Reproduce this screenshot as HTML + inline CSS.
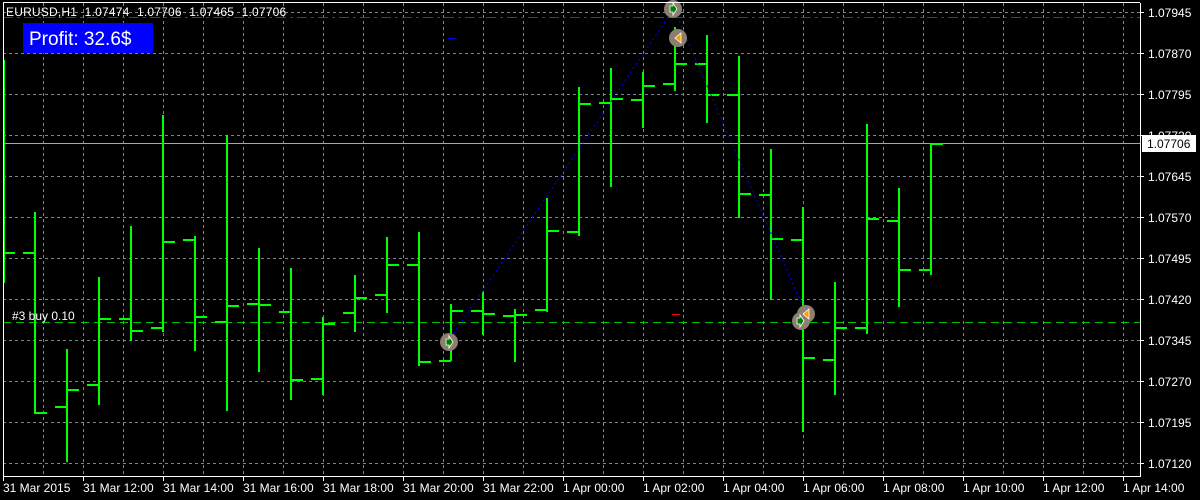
<!DOCTYPE html>
<html><head><meta charset="utf-8"><style>
html,body{margin:0;padding:0;background:#000;width:1200px;height:500px;overflow:hidden}
svg text{font-family:"Liberation Sans",sans-serif;font-size:12px;fill:#fff}
</style></head><body>
<svg width="1200" height="500" xmlns="http://www.w3.org/2000/svg">
<rect width="1200" height="500" fill="#000"/>
<g stroke="#7b8593" stroke-width="1" stroke-dasharray="3,3">
<path d="M3 12.5H1140M3 53.5H1140M3 94.5H1140M3 135.5H1140M3 176.5H1140M3 217.5H1140M3 258.5H1140M3 299.5H1140M3 340.5H1140M3 381.5H1140M3 422.5H1140M3 463.5H1140"/>
<path d="M43.5 3V476M83.5 3V476M123.5 3V476M163.5 3V476M203.5 3V476M243.5 3V476M283.5 3V476M323.5 3V476M363.5 3V476M403.5 3V476M443.5 3V476M483.5 3V476M523.5 3V476M563.5 3V476M603.5 3V476M643.5 3V476M683.5 3V476M723.5 3V476M763.5 3V476M803.5 3V476M843.5 3V476M883.5 3V476M923.5 3V476M963.5 3V476M1003.5 3V476M1043.5 3V476M1083.5 3V476M1123.5 3V476"/>
</g>
<path d="M3 17.5H1140" stroke="#e00000" stroke-width="1" stroke-dasharray="10,4,3,4"/>
<path d="M3 322.5H1140" stroke="#00c000" stroke-width="1" stroke-dasharray="8,5"/>
<path d="M3 143.5H1140" stroke="#a0a8b0" stroke-width="1"/>
<path d="M448 38.5H456" stroke="#0000ff" stroke-width="1"/>
<path d="M672 314.5H680" stroke="#ff0000" stroke-width="1"/>
<g stroke="#00ff00" stroke-width="2" fill="none">
<path d="M4 60V283M3 253H15"/>
<path d="M35 212V414M23 253H35M35 413H47"/>
<path d="M67 349V462M55 407H67M67 390H79"/>
<path d="M99 277V405M87 385H99M99 319H111"/>
<path d="M131 226V341M119 319H131M131 331H143"/>
<path d="M163 115V332M151 328H163M163 242H175"/>
<path d="M195 236V351M183 240H195M195 317H207"/>
<path d="M227 135V411M215 322H227M227 306H239"/>
<path d="M259 248V372M247 304H259M259 305H271"/>
<path d="M291 268V400M279 312H291M291 380H303"/>
<path d="M323 317V395M311 379H323M323 324H335"/>
<path d="M355 275V332M343 313H355M355 298H367"/>
<path d="M387 237V313M375 295H387M387 265H399"/>
<path d="M419 232V366M407 265H419M419 362H431"/>
<path d="M451 304V361M439 361H451M451 311H463"/>
<path d="M483 292V335M471 311H483M483 314H495"/>
<path d="M515 309V362M503 316H515M515 315H527"/>
<path d="M547 198V312M535 310H547M547 231H559"/>
<path d="M579 87V236M567 232H579M579 104H591"/>
<path d="M611 68V187M599 103H611M611 99H623"/>
<path d="M643 72V128M631 100H643M643 86H655"/>
<path d="M675 27V91M663 84H675M675 64H687"/>
<path d="M707 35V123M695 64H707M707 95H719"/>
<path d="M739 56V218M727 95H739M739 194H751"/>
<path d="M771 149V300M759 195H771M771 239H783"/>
<path d="M803 207V432M791 240H803M803 358H815"/>
<path d="M835 282V395M823 360H835M835 328H847"/>
<path d="M867 124V334M855 328H867M867 219H879"/>
<path d="M899 188V307M887 221H899M899 270H911"/>
<path d="M931 144V275M919 270H931M931 144H943"/>
</g>
<g stroke="#0000ff" stroke-width="1" stroke-dasharray="2,3" fill="none">
<path d="M448 342L673 10"/>
<path d="M675 12L806 314"/>
</g>
<g fill="#8c7f72">
<circle cx="449" cy="342" r="9"/>
<circle cx="673" cy="9" r="9"/>
<circle cx="678" cy="38" r="9"/>
<circle cx="806" cy="314" r="9"/>
<circle cx="801" cy="321" r="9"/>
</g>
<g fill="#008000" stroke="#fff" stroke-width="0.8">
<path d="M446 339h3v-3l4 6-4 6v-3h-3z"/>
<path d="M670 6h3v-3l4 6-4 6v-3h-3z"/>
<path d="M797 318h3v-3l4 6-4 6v-3h-3z"/>
</g>
<g fill="#ff9900" stroke="#fff" stroke-width="0.8">
<path d="M681 33v10l-6-5z"/>
<path d="M809 309v10l-6-5z"/>
</g>
<path d="M3.5 3V476.5H1140.5V3" stroke="#fff" stroke-width="1" fill="none"/>
<path d="M3 2.5H1140" stroke="#fff" stroke-width="1"/>
<g stroke="#fff" stroke-width="1">
<path d="M1140 12.5h4M1140 53.5h4M1140 94.5h4M1140 135.5h4M1140 176.5h4M1140 217.5h4M1140 258.5h4M1140 299.5h4M1140 340.5h4M1140 381.5h4M1140 422.5h4M1140 463.5h4"/>
<path d="M3.5 476v5M83.5 476v5M163.5 476v5M243.5 476v5M323.5 476v5M403.5 476v5M483.5 476v5M563.5 476v5M643.5 476v5M723.5 476v5M803.5 476v5M883.5 476v5M963.5 476v5M1043.5 476v5M1123.5 476v5"/>
</g>
<g>
<text x="1148" y="17">1.07945</text>
<text x="1148" y="58">1.07870</text>
<text x="1148" y="99">1.07795</text>
<text x="1148" y="140">1.07720</text>
<text x="1148" y="181">1.07645</text>
<text x="1148" y="222">1.07570</text>
<text x="1148" y="263">1.07495</text>
<text x="1148" y="304">1.07420</text>
<text x="1148" y="345">1.07345</text>
<text x="1148" y="386">1.07270</text>
<text x="1148" y="427">1.07195</text>
<text x="1148" y="468">1.07120</text>
</g>
<rect x="1142" y="135" width="54" height="17" fill="#fff"/>
<text x="1147" y="148" style="fill:#000">1.07706</text>
<g>
<text x="3" y="492">31 Mar 2015</text>
<text x="83" y="492">31 Mar 12:00</text>
<text x="163" y="492">31 Mar 14:00</text>
<text x="243" y="492">31 Mar 16:00</text>
<text x="323" y="492">31 Mar 18:00</text>
<text x="403" y="492">31 Mar 20:00</text>
<text x="483" y="492">31 Mar 22:00</text>
<text x="563" y="492">1 Apr 00:00</text>
<text x="643" y="492">1 Apr 02:00</text>
<text x="723" y="492">1 Apr 04:00</text>
<text x="803" y="492">1 Apr 06:00</text>
<text x="883" y="492">1 Apr 08:00</text>
<text x="963" y="492">1 Apr 10:00</text>
<text x="1043" y="492">1 Apr 12:00</text>
<text x="1123" y="492">1 Apr 14:00</text>
</g>
<text x="6" y="16" style="word-spacing:4px;letter-spacing:0.2px">EURUSD,H1  1.07474 1.07706 1.07465 1.07706</text>
<text x="12" y="320">#3 buy 0.10</text>
<rect x="23" y="23" width="130" height="30" fill="#0000ff"/>
<text x="29" y="45" style="font-size:19px">Profit: 32.6$</text>
</svg>
</body></html>
